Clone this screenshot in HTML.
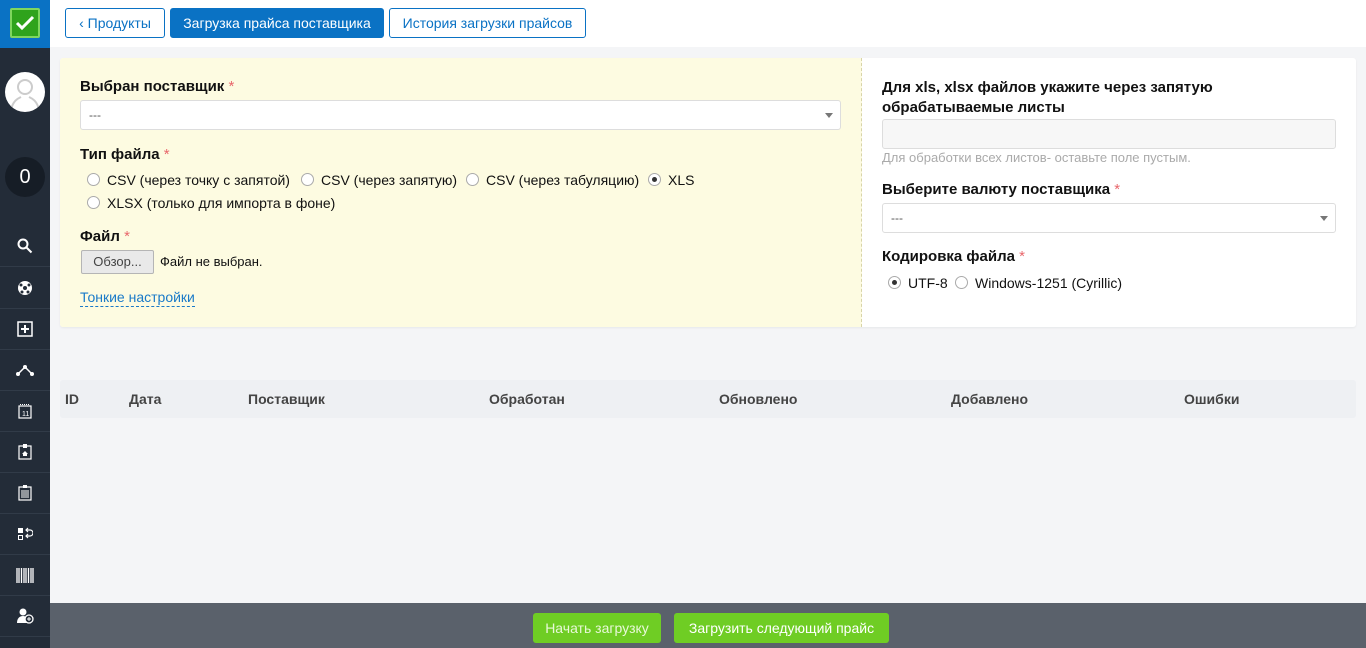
<!DOCTYPE html>
<html><head><meta charset="utf-8"><style>
*{box-sizing:border-box;margin:0;padding:0}
body{width:1366px;height:648px;overflow:hidden;background:#f4f5f7;font-family:"Liberation Sans",sans-serif;font-size:14px;color:#111;position:relative}
.side{position:absolute;left:0;top:0;width:50px;height:648px;background:#232c38}
.logo{position:absolute;left:0;top:0;width:50px;height:48px;background:#0a72c4}
.logo div{position:absolute;left:10px;top:8px;width:30px;height:30px;background:#2fa31c;border:2px solid #7fd65e;border-radius:2px}
.av{position:absolute;left:5px;top:72px;width:40px;height:40px;border-radius:50%;background:#fff;overflow:hidden}
.cnt{position:absolute;left:5px;top:157px;width:40px;height:40px;border-radius:50%;background:#161d26;color:#fff;font-size:20px;text-align:center;line-height:40px}
.ic{position:absolute;left:0;width:50px;height:41px;border-bottom:1px solid #313b48;display:flex;align-items:center;justify-content:center}
.top{position:absolute;left:50px;top:0;width:1316px;height:47px;background:#fff}
.btn{position:absolute;top:8px;height:30px;border:1px solid #0a72c4;border-radius:3px;color:#0a72c4;font-size:14px;line-height:28px;text-align:center;background:#fff}
.panel{position:absolute;left:60px;top:58px;width:1296px;height:269px;background:#fff;border-radius:3px;box-shadow:0 1px 2px rgba(0,0,0,.06)}
.left{position:absolute;left:0;top:0;width:802px;height:269px;background:#fdfbe1;border-right:1px dashed #d8d4a8;border-radius:3px 0 0 3px}
.lbl{position:absolute;font-weight:bold;font-size:15px}
.req{color:#e8666b;font-weight:normal}
.sel{position:absolute;height:30px;border:1px solid #ddd;border-radius:3px;background:#fff;font-size:12px;color:#555;padding-left:8px;line-height:28px}
.sel:after{content:"";position:absolute;right:7px;top:12px;border:4px solid transparent;border-top:5px solid #777;border-bottom:0}
.r{position:absolute;font-size:14px;white-space:nowrap}
.rb{display:inline-block;width:13px;height:13px;border:1px solid #aaa;border-radius:50%;background:#fff;vertical-align:-1px;margin-right:7px;position:relative}
.rb.on:after{content:"";position:absolute;left:3px;top:3px;width:5px;height:5px;border-radius:50%;background:#333}
.th{position:absolute;left:60px;top:380px;width:1296px;height:38px;background:#eef0f3;border-radius:3px;font-weight:bold;color:#444;font-size:14px}
.th span{position:absolute;top:11px}
.foot{position:absolute;left:50px;top:603px;width:1316px;height:45px;background:#5a616b}
.g{position:absolute;top:10px;height:30px;background:#6fcd24;border-radius:3px;color:#fff;line-height:30px;text-align:center;font-size:14px}
</style></head><body>
<div class="side">
<div class="logo"><div><svg width="26" height="26" viewBox="0 0 26 26"><path d="M5 13l5 5 11-11" stroke="#fff" stroke-width="3" fill="none"/></svg></div></div>
<div class="av"><svg width="40" height="40" viewBox="0 0 40 40"><circle cx="20" cy="15" r="7" fill="none" stroke="#ccc" stroke-width="2"/><path d="M6 38c2-10 8-12 10-13M34 38c-2-10-8-12-10-13" stroke="#ccc" stroke-width="2" fill="none"/></svg></div>
<div class="cnt">0</div>
<div class="ic" style="top:226px"><svg width="16" height="16"><circle cx="6" cy="6" r="4.5" stroke="#fff" stroke-width="2" fill="none"/><path d="M9.5 9.5l5 5" stroke="#fff" stroke-width="2"/></svg></div>
<div class="ic" style="top:268px"><svg width="16" height="16"><circle cx="8" cy="8" r="7" fill="#fff"/><circle cx="8" cy="8" r="2" fill="#232c38"/><circle cx="4" cy="5" r="1.5" fill="#232c38"/><circle cx="12" cy="5" r="1.5" fill="#232c38"/><circle cx="5" cy="12" r="1.5" fill="#232c38"/><circle cx="11" cy="12" r="1.5" fill="#232c38"/></svg></div>
<div class="ic" style="top:309px"><svg width="16" height="16"><rect x="1" y="1" width="14" height="14" fill="none" stroke="#fff" stroke-width="1.5"/><path d="M8 4v8M4 8h8" stroke="#fff" stroke-width="2"/></svg></div>
<div class="ic" style="top:350px"><svg width="18" height="12"><path d="M2 10l7-7 7 7" stroke="#fff" stroke-width="1.5" fill="none"/><circle cx="2" cy="10" r="2" fill="#fff"/><circle cx="9" cy="3" r="2" fill="#fff"/><circle cx="16" cy="10" r="2" fill="#fff"/></svg></div>
<div class="ic" style="top:391px"><svg width="14" height="16"><rect x="1" y="3" width="12" height="12" fill="none" stroke="#fff" stroke-width="1.2"/><path d="M2 1.5h10" stroke="#fff" stroke-dasharray="1 1"/><text x="4" y="13" font-size="7" fill="#fff">11</text></svg></div>
<div class="ic" style="top:432px"><svg width="14" height="16"><rect x="1" y="2" width="12" height="13" fill="none" stroke="#fff" stroke-width="1.2"/><rect x="5" y="0" width="4" height="4" fill="#fff"/><path d="M7 7l3 3H4z" fill="#fff"/><rect x="5" y="9" width="4" height="3" fill="#fff"/></svg></div>
<div class="ic" style="top:473px"><svg width="14" height="16"><rect x="1" y="2" width="12" height="13" fill="none" stroke="#fff" stroke-width="1.2"/><rect x="5" y="0" width="4" height="3" fill="#fff"/><path d="M3 6h8M3 8h8M3 10h8M3 12h8" stroke="#fff"/></svg></div>
<div class="ic" style="top:514px"><svg width="16" height="14"><rect x="1" y="1" width="5" height="5" fill="#fff"/><rect x="1.5" y="8.5" width="4" height="4" fill="none" stroke="#fff"/><path d="M9 3h4a2 2 0 010 6H9M11 1l-2 2 2 2M11 7l-2 2 2 2" stroke="#fff" fill="none" stroke-width="1.2"/></svg></div>
<div class="ic" style="top:555px"><svg width="18" height="15"><path d="M1 0v15M3 0v15M5.5 0v15M8 0v15M10 0v15M12.5 0v15M15 0v15M17 0v15" stroke="#fff" stroke-width="1.3"/></svg></div>
<div class="ic" style="top:596px"><svg width="18" height="16"><circle cx="7" cy="4" r="3.5" fill="#fff"/><path d="M1 15c0-5 3-7 6-7s5 2 5 4v3z" fill="#fff"/><circle cx="13" cy="11" r="4" fill="#232c38" stroke="#fff" stroke-width="1.3"/><path d="M13 9v4M11 11h4" stroke="#fff"/></svg></div>
</div>
<div class="top">
<div class="btn" style="left:15px;width:100px">‹ Продукты</div>
<div class="btn" style="left:120px;width:214px;background:#0a72c4;color:#fff">Загрузка прайса поставщика</div>
<div class="btn" style="left:339px;width:197px">История загрузки прайсов</div>
</div>
<div class="panel">
<div class="left">
<div class="lbl" style="left:20px;top:20px">Выбран поставщик <span class="req">*</span></div>
<div class="sel" style="left:20px;top:42px;width:761px">---</div>
<div class="lbl" style="left:20px;top:88px">Тип файла <span class="req">*</span></div>
<div class="r" style="left:27px;top:114px"><span class="rb"></span>CSV (через точку с запятой)</div>
<div class="r" style="left:241px;top:114px"><span class="rb"></span>CSV (через запятую)</div>
<div class="r" style="left:406px;top:114px"><span class="rb"></span>CSV (через табуляцию)</div>
<div class="r" style="left:588px;top:114px"><span class="rb on"></span>XLS</div>
<div class="r" style="left:27px;top:137px"><span class="rb"></span>XLSX (только для импорта в фоне)</div>
<div class="lbl" style="left:20px;top:170px">Файл <span class="req">*</span></div>
<div style="position:absolute;left:21px;top:192px;width:73px;height:24px;border:1px solid #b5b5b5;background:#e9e9e9;border-radius:2px;font-size:13px;color:#444;text-align:center;line-height:22px">Обзор...</div>
<div class="r" style="left:100px;top:196px;font-size:13px">Файл не выбран.</div>
<div class="r" style="left:20px;top:231px;color:#1a7ac8;border-bottom:1px dashed #1a7ac8;line-height:17px">Тонкие настройки</div>
</div>
<div class="lbl" style="left:822px;top:20px;line-height:20px">Для xls, xlsx файлов укажите через запятую<br>обрабатываемые листы</div>
<div style="position:absolute;left:822px;top:61px;width:454px;height:30px;border:1px solid #ddd;border-radius:3px;background:#f7f7f7"></div>
<div class="r" style="left:822px;top:92px;font-size:13px;color:#aaa">Для обработки всех листов- оставьте поле пустым.</div>
<div class="lbl" style="left:822px;top:123px">Выберите валюту поставщика <span class="req">*</span></div>
<div class="sel" style="left:822px;top:145px;width:454px">---</div>
<div class="lbl" style="left:822px;top:190px">Кодировка файла <span class="req">*</span></div>
<div class="r" style="left:828px;top:217px"><span class="rb on"></span>UTF-8</div>
<div class="r" style="left:895px;top:217px"><span class="rb"></span>Windows-1251 (Cyrillic)</div>
</div>
<div class="th"><span style="left:5px">ID</span><span style="left:69px">Дата</span><span style="left:188px">Поставщик</span><span style="left:429px">Обработан</span><span style="left:659px">Обновлено</span><span style="left:891px">Добавлено</span><span style="left:1124px">Ошибки</span></div>
<div class="foot">
<div class="g" style="left:483px;width:128px;color:#e8f8d8">Начать загрузку</div>
<div class="g" style="left:624px;width:215px">Загрузить следующий прайс</div>
</div>
</body></html>
